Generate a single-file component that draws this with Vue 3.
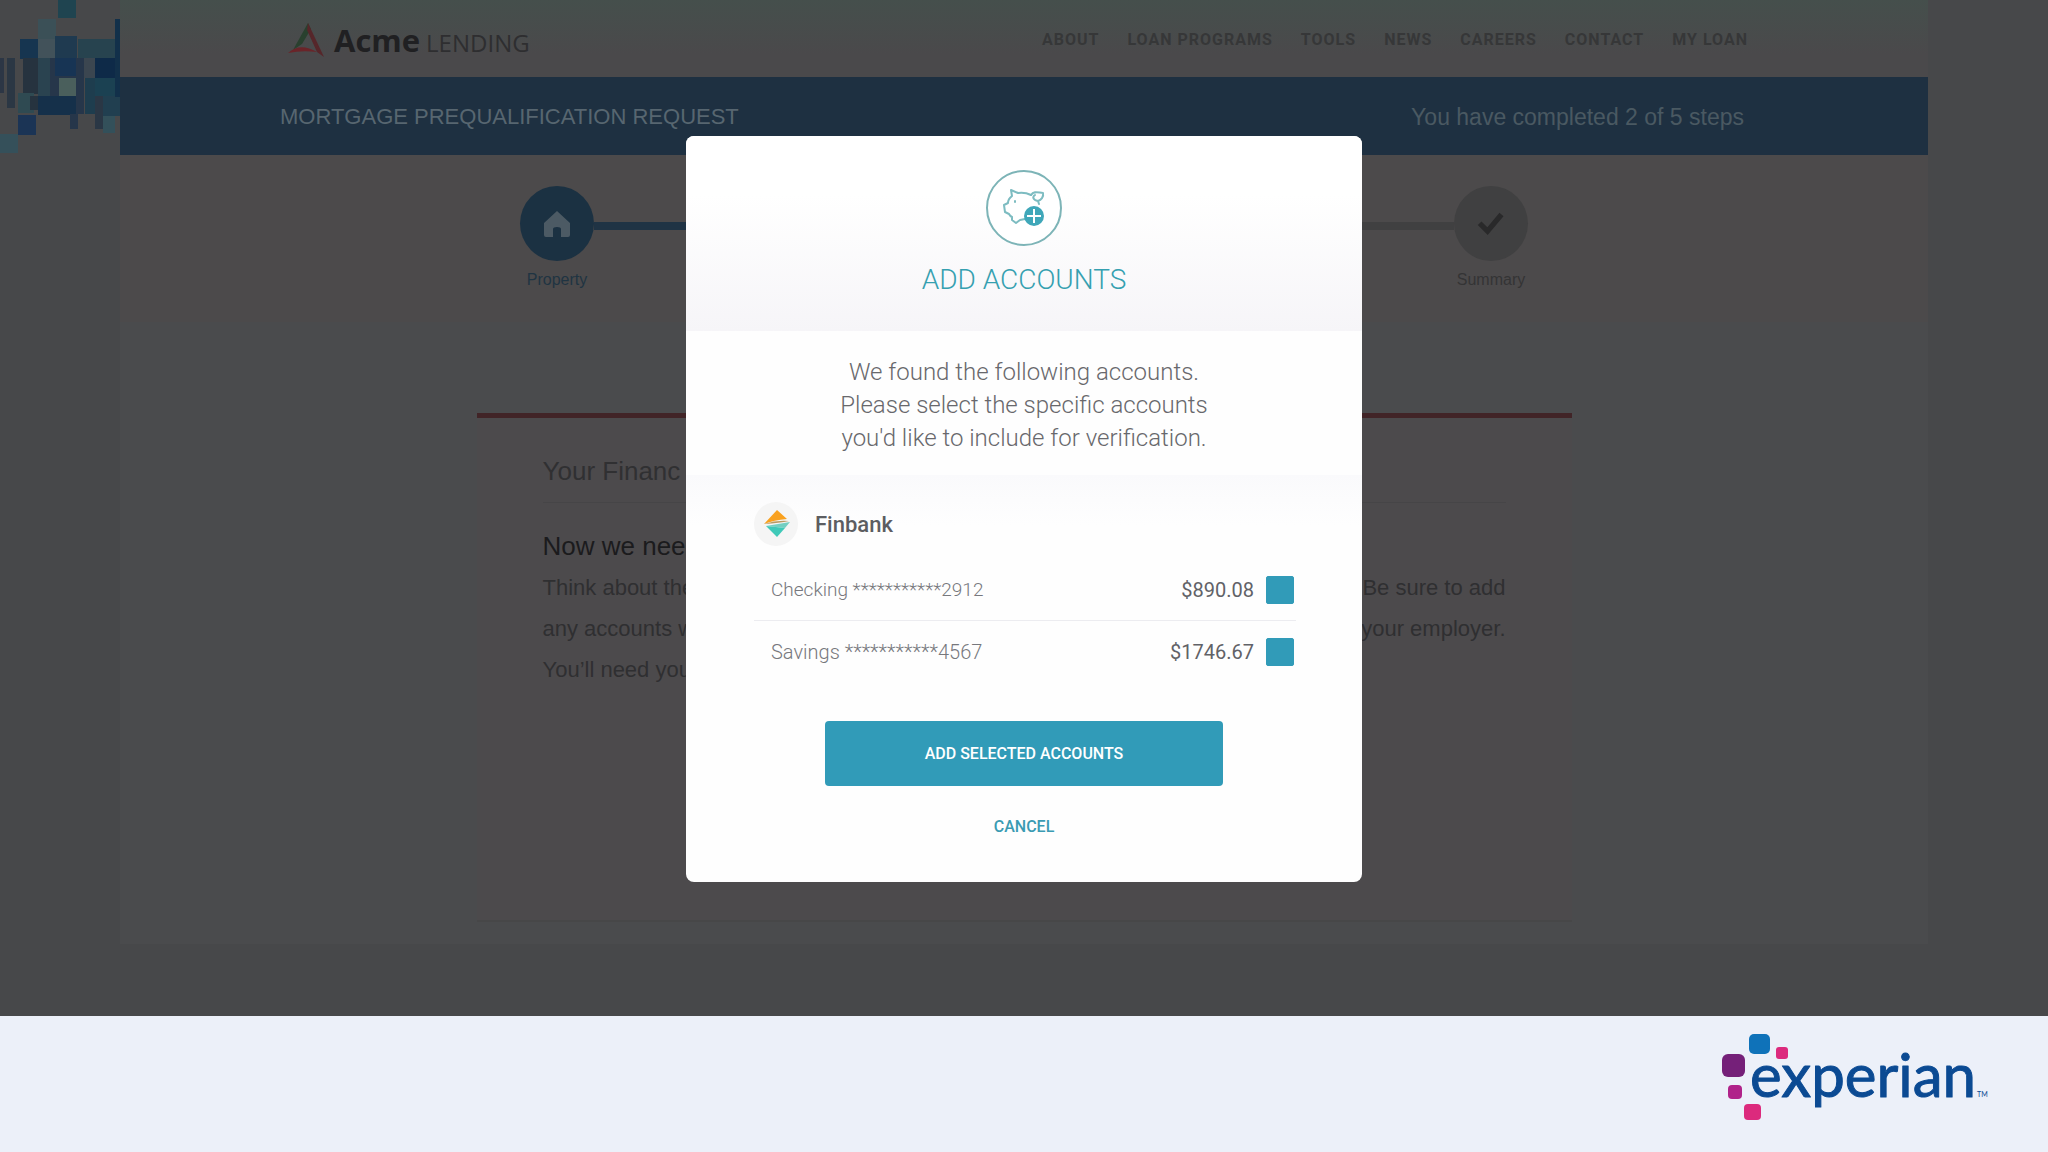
<template>
  <div class="screen">
    <main class="stage">
      <svg class="mosaic" viewBox="0 0 120 156" aria-hidden="true">
        <rect
          v-for="(t, i) in tiles"
          :key="i"
          :x="t[0]"
          :y="t[1]"
          :width="t[2]"
          :height="t[3]"
          :fill="t[4]"
        />
      </svg>

      <div class="page">
        <header class="site-header">
          <a class="brand" href="#">
            <svg viewBox="0 0 36 34" aria-hidden="true">
              <path d="M20 0 L23 6 L14 21 L5 27 Z" fill="#29402e" />
              <path d="M20 0 L36 34 L29 29 L19 7 Z" fill="#56262a" />
              <path d="M0 30 Q12 19 29 29 Q14 27 0 30 Z" fill="#6a2429" />
            </svg>
            <strong>Acme</strong>
            <span>LENDING</span>
          </a>
          <nav class="menu">
            <a v-for="item in menu" :key="item" href="#">{{ item }}</a>
          </nav>
        </header>

        <div class="title-bar">
          <h1>MORTGAGE PREQUALIFICATION REQUEST</h1>
          <span>You have completed 2 of 5 steps</span>
        </div>

        <section class="steps">
          <div class="step done">
            <div class="dot">
              <svg viewBox="0 0 28 28" aria-hidden="true">
                <path d="M14 1 L27 13 V25 Q27 27 25 27 H18 V19 Q18 17 14 17 Q10 17 10 19 V27 H3 Q1 27 1 25 V13 Z" fill="#4c5a64" />
              </svg>
            </div>
            <span>Property</span>
          </div>
          <div class="track done"></div>
          <div class="track"></div>
          <div class="step">
            <div class="dot">
              <svg viewBox="0 0 32 28" aria-hidden="true">
                <path d="M3 14 L12 23 L28 4" fill="none" stroke="#29292a" stroke-width="6" />
              </svg>
            </div>
            <span>Summary</span>
          </div>
        </section>

        <section class="content">
          <article class="card">
            <h2>Your Financ</h2>
            <h3>Now we need</h3>
            <div class="copy">
              <p>
                <span>Think about the</span>
                <span>any accounts w</span>
                <span>You’ll need you</span>
              </p>
              <p class="tail">
                <span>Be sure to add</span>
                <span>your employer.</span>
              </p>
            </div>
          </article>
        </section>
      </div>

      <div class="overlay">
        <form class="modal" role="dialog" aria-labelledby="modal-title" @submit.prevent>
          <div class="modal-head">
            <svg class="piggy" viewBox="0 0 78 78" aria-hidden="true">
              <circle cx="39" cy="39" r="37" fill="#fff" stroke="#7db4b7" stroke-width="2" />
              <g fill="none" stroke="#7dbcc1" stroke-width="2" stroke-linejoin="round" stroke-linecap="round">
                <path d="M46 26 Q40 23 33 24 L26 21 L27 27 Q23 30 23 34 L19 36 L20 43 L24 45 Q25 47 27 48 L27 51 L31 54 L35 51 L40 50" />
                <path d="M46 26 C49 21 54 24 58 24 C59 28 56 31 53 32 L54 35 M53 32 C48 31 47 28 50 26" />
                <path d="M30 32 V33" />
              </g>
              <circle cx="49" cy="47" r="10" fill="#3fa7b9" />
              <path d="M49 40 V54 M42 47 H56" stroke="#fff" stroke-width="2" />
            </svg>
            <h2 id="modal-title">ADD ACCOUNTS</h2>
          </div>

          <p class="intro">
            We found the following accounts.<br />
            Please select the specific accounts<br />
            you'd like to include for verification.
          </p>

          <div class="accounts">
            <div class="bank">
              <svg viewBox="0 0 44 44" aria-hidden="true">
                <circle cx="22" cy="22" r="22" fill="#f5f5f5" />
                <path d="M23 8 L33 17 Q20 18 10 22 Z" fill="#f9a11f" />
                <path d="M10 22 Q22 18 35 19 Q26 21 10 22 Z" fill="#b99a62" />
                <path d="M12 24 Q24 22 36 20 L31 26 Q22 25 12 24 Z" fill="#74cfc2" />
                <path d="M12 24 Q22 25 31 26 L23 35 Z" fill="#3fc9b8" />
              </svg>
              <strong>Finbank</strong>
            </div>
            <label v-for="acc in accounts" :key="acc.id" class="account">
              <span class="name">{{ acc.name }}</span>
              <span class="amount">{{ acc.amount }}</span>
              <input v-model="acc.selected" type="checkbox" />
            </label>
          </div>

          <div class="actions">
            <button class="submit" type="submit">ADD SELECTED ACCOUNTS</button>
            <button class="cancel" type="button">CANCEL</button>
          </div>
        </form>
      </div>
    </main>

    <footer class="footer">
      <svg class="experian" viewBox="0 0 270 90" role="img" aria-label="experian">
        <rect x="27" y="2" width="21" height="20" rx="5" fill="#0f72b9" />
        <rect x="54" y="15" width="12" height="12" rx="3" fill="#dc2a7d" />
        <rect x="0" y="22" width="23" height="23" rx="6" fill="#752079" />
        <rect x="6" y="53" width="14" height="14" rx="4" fill="#b0228a" />
        <rect x="22" y="72" width="17" height="16" rx="4" fill="#dc2a7d" />
        <text class="wordmark" x="28" y="65">experian</text>
        <text class="tm" x="255" y="65">TM</text>
      </svg>
    </footer>
  </div>
</template>

<script setup>
import { ref } from 'vue'

const menu = ['ABOUT', 'LOAN PROGRAMS', 'TOOLS', 'NEWS', 'CAREERS', 'CONTACT', 'MY LOAN']

const accounts = ref([
  { id: 1, name: 'Checking ***********2912', amount: '$890.08', selected: true },
  { id: 2, name: 'Savings ***********4567', amount: '$1746.67', selected: true },
])

// x, y, width, height, colour
const tiles = [
  [58, 0, 18, 18, '#1f4450'],
  [38, 19, 18, 20, '#3b5057'],
  [20, 39, 18, 20, '#163550'],
  [38, 39, 17, 19, '#42525a'],
  [55, 36, 22, 22, '#1f3a50'],
  [78, 39, 42, 19, '#27434f'],
  [0, 58, 4, 35, '#2c3645'],
  [7, 58, 8, 50, '#2b3744'],
  [23, 58, 15, 36, '#26333f'],
  [38, 58, 14, 38, '#2a4350'],
  [50, 58, 34, 56, '#26364a'],
  [55, 58, 21, 18, '#173454'],
  [84, 58, 11, 20, '#3b4650'],
  [95, 58, 25, 20, '#0e2a48'],
  [59, 78, 17, 18, '#4a5f5c'],
  [85, 78, 10, 36, '#1e3d4e'],
  [95, 78, 25, 18, '#1b4152'],
  [18, 93, 16, 20, '#2f4a52'],
  [30, 96, 8, 14, '#26333f'],
  [38, 96, 38, 19, '#15304a'],
  [18, 115, 18, 20, '#1b3455'],
  [70, 114, 8, 15, '#26364a'],
  [103, 96, 17, 20, '#213f50'],
  [103, 116, 12, 17, '#33505a'],
  [95, 96, 8, 33, '#2a3745'],
  [115, 19, 5, 78, '#12304a'],
  [0, 134, 18, 19, '#35505a'],
]
</script>

<style>
body {
  margin: 0;
}
</style>

<style scoped>
.screen {
  display: flex;
  flex-direction: column;
  min-height: 100vh;
  font-family: "Liberation Sans", Arial, sans-serif;
  background: #ecf0f9;
}

h1,
h2,
h3,
p {
  margin: 0;
}

a {
  color: inherit;
  text-decoration: none;
}

.stage {
  position: relative;
  flex: 1;
  padding: 0 120px 72px;
  background: #47484a;
}

.mosaic {
  position: absolute;
  top: 0;
  left: 0;
  width: 120px;
}

.page {
  display: flex;
  flex-direction: column;
  background: #4a4b4d;
}

.site-header {
  display: flex;
  align-items: center;
  justify-content: space-between;
  height: 77px;
  padding: 2px 180px 0 168px;
  box-sizing: border-box;
  background: linear-gradient(#454f4c, #4a494b 70%);
}

.brand {
  display: flex;
  align-items: baseline;
  gap: 6px;
  font-family: "Open Sans", sans-serif;
  font-size: 24px;
  color: #2e2e30;
}

.brand svg {
  align-self: center;
  width: 36px;
  margin-right: 4px;
}

.brand strong {
  font-size: 31px;
  color: #202022;
}

.menu {
  display: flex;
  gap: 28px;
  font-family: Roboto, sans-serif;
  font-size: 16px;
  font-weight: 700;
  letter-spacing: 1px;
  color: #363738;
}

.title-bar {
  display: flex;
  align-items: center;
  justify-content: space-between;
  height: 78px;
  padding: 2px 184px 0 160px;
  box-sizing: border-box;
  font-size: 23px;
  color: #4a5962;
  background: #1e3041;
}

.title-bar h1 {
  font-size: 22px;
  font-weight: 400;
  color: #576670;
}

.steps {
  display: flex;
  justify-content: center;
  box-sizing: border-box;
  height: 167px;
  padding-top: 31px;
  background: #4c4a4b;
}

.step {
  display: flex;
  flex-direction: column;
  align-items: center;
  gap: 10px;
  width: 74px;
  font-size: 16px;
  color: #343435;
}

.step.done {
  color: #1f3442;
}

.dot {
  display: flex;
  align-items: center;
  justify-content: center;
  width: 74px;
  height: 75px;
  border-radius: 50%;
  background: #404041;
}

.done .dot {
  background: #1b3142;
}

.dot svg {
  width: 28px;
}

.track {
  width: 430px;
  height: 8px;
  margin-top: 36px;
  background: #404041;
}

.track.done {
  background: #1f3344;
}

.content {
  display: flex;
  justify-content: center;
  padding: 91px 0 22px;
}

.card {
  box-sizing: border-box;
  width: 1095px;
  min-height: 509px;
  padding: 40px 66px;
  border-top: 5px solid #412427;
  border-bottom: 2px solid #474748;
  background: #4c4a4c;
}

.card h2 {
  padding-bottom: 18px;
  border-bottom: 1px solid #464547;
  font-size: 26px;
  line-height: 26px;
  font-weight: 400;
  color: #303032;
}

.card h3 {
  padding-top: 28px;
  font-size: 26px;
  line-height: 30px;
  font-weight: 400;
  color: #1b1b1d;
}

.copy {
  display: flex;
  justify-content: space-between;
  padding-top: 6px;
  font-size: 22px;
  line-height: 41px;
  color: #2f2f31;
}

.copy span {
  display: block;
}

.tail {
  text-align: right;
}

.overlay {
  position: absolute;
  top: 136px;
  left: 0;
  right: 0;
  display: flex;
  justify-content: center;
}

.modal {
  width: 676px;
  overflow: hidden;
  border-radius: 8px;
  font-family: Roboto, sans-serif;
  background: #fefefe;
}

.modal-head {
  display: flex;
  flex-direction: column;
  align-items: center;
  gap: 15px;
  padding: 33px 0;
  background: linear-gradient(#fff 30%, #f6f5f8);
}

.piggy {
  width: 78px;
}

.modal-head h2 {
  font-size: 28px;
  line-height: 36px;
  font-weight: 300;
  color: #35a0b0;
}

.intro {
  padding: 25px 0 20px;
  font-size: 24px;
  line-height: 33px;
  font-weight: 300;
  text-align: center;
  color: #68686c;
}

.accounts {
  padding: 27px 66px 24px 68px;
  background: linear-gradient(#fafafc, #fefefe 50px);
}

.bank {
  display: flex;
  align-items: center;
  gap: 17px;
  margin-bottom: 13px;
  color: #5c5d61;
}

.bank svg {
  width: 44px;
}

.bank strong {
  font-size: 22px;
  font-weight: 500;
}

.account {
  display: flex;
  align-items: center;
  gap: 12px;
  height: 61px;
  padding: 0 2px 0 17px;
  font-size: 20px;
  color: #616267;
}

.account + .account {
  border-top: 1px solid #ececf0;
}

.account .name {
  flex: 1;
  font-weight: 300;
  color: #77787d;
}

.account:first-of-type .name {
  font-size: 19px;
}

.account input {
  appearance: none;
  width: 28px;
  height: 28px;
  margin: 0;
  border: 1px solid #319bb8;
  border-radius: 2px;
  background: #fff;
}

.account input:checked {
  background: #319bb8;
}

.actions {
  display: flex;
  flex-direction: column;
  align-items: center;
  gap: 29px;
  padding: 15px 0 43px;
}

.actions button {
  border: 0;
  font-family: inherit;
  font-size: 16px;
  font-weight: 500;
  cursor: pointer;
}

.actions .submit {
  width: 398px;
  height: 65px;
  border-radius: 4px;
  color: #fff;
  background: #319bb8;
}

.actions .cancel {
  padding: 0;
  line-height: 24px;
  color: #3a9bb3;
  background: none;
}

.footer {
  display: flex;
  align-items: center;
  justify-content: flex-end;
  height: 136px;
  padding-right: 56px;
}

.experian {
  width: 270px;
  margin-bottom: 14px;
}

.wordmark {
  font-family: Lato, sans-serif;
  font-size: 60px;
  fill: #0b4a93;
  stroke: #0b4a93;
  stroke-width: 1px;
  stroke-linejoin: round;
}

.tm {
  font-family: Lato, sans-serif;
  font-size: 7px;
  fill: #0b4a93;
}
</style>
